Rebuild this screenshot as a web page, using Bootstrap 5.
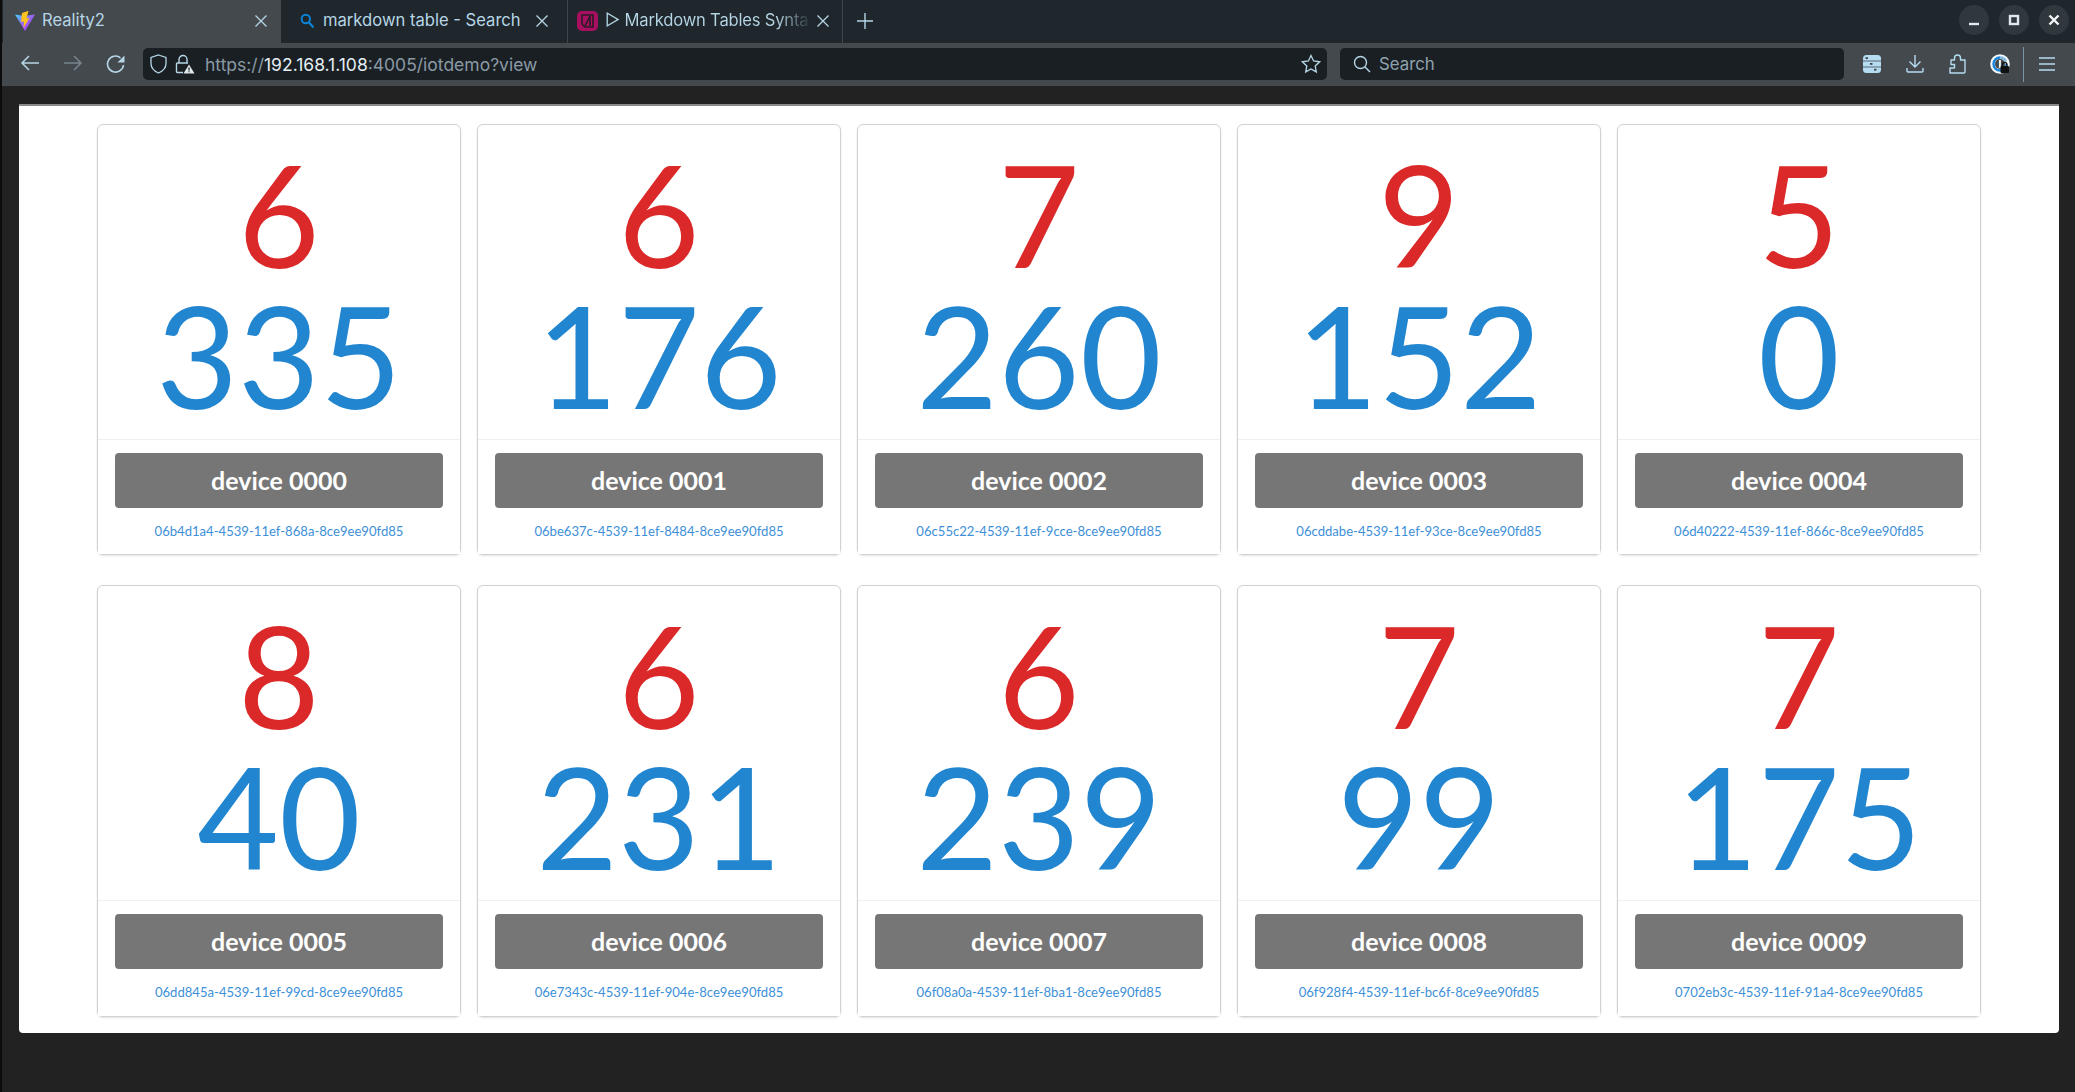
<!DOCTYPE html>
<html lang="en">
<head>
    <meta charset="UTF-8">
    <title>Reality2</title>
    <link href="https://cdn.jsdelivr.net/npm/bootstrap@5.3.0/dist/css/bootstrap.min.css" rel="stylesheet">
    <style>
        html, body { height: 1092px; overflow: hidden; }
        body { background: #222; font-family: "Lato", "Liberation Sans", sans-serif; border-left: 2px solid #0c0c0c; }

        /* browser chrome */
        .chrome { font-family: "Inter", "Liberation Sans", sans-serif; color: #b6d6e6; }
        .tabbar { height: 43px; background: #1f272c; padding-left: 1px; }
        .tabx { height: 43px; font-size: 16.6px; padding-bottom: 2px; white-space: nowrap; overflow: hidden; border-right: 1px solid #3d464c; }
        .tabx svg { flex: none; }
        .tabx .tt { flex: 1; overflow: hidden; }
        .tab-a { width: 278px; background: #44494e; border-right: 0; padding-left: 12px; padding-right: 13px; gap: 7px; }
        .tab-b { width: 287px; padding-left: 19px; padding-right: 18px; gap: 9px; }
        .tab-c { width: 275px; padding-left: 9px; padding-right: 12px; gap: 7px; }
        .tt-fade { letter-spacing: -.2px; color: transparent; background: linear-gradient(90deg, #b6d6e6 84%, #2c353a 100%); -webkit-background-clip: text; background-clip: text; }
        .newtab { margin-left: 14px; margin-bottom: 2px; }
        .winbtns { margin-left: auto; gap: 10px; padding-right: 6px; margin-bottom: 3px; }
        .winbtn { width: 30px; height: 30px; border-radius: 50%; background: #30383d; }
        .toolbar { height: 43px; background: #44494e; padding: 5px 0 6px 0; }
        .navico { width: 43px; flex: none; }
        .navs { width: 141px; padding-left: 6px; flex: none; }
        .urlbar { width: 1184px; height: 32px; background: #1a1f24; border-radius: 5px; flex: none; padding: 0 6px 0 7px; font-size: 17.5px; }
        .urlbar .u1 { color: #8a9aa5; }
        .urlbar .u2 { color: #e4eef4; }
        .urltext { margin-left: 10px; padding-top: 2px; white-space: nowrap; }
        .searchbar { width: 504px; height: 32px; background: #1a1f24; border-radius: 5px; flex: none; margin-left: 13px; padding-left: 13px; font-size: 16.8px; color: #8fa3af; gap: 8px; }
        .searchbar span { padding-top: 2px; }
        .tools { margin-left: 7px; }
        .toolico { width: 42.5px; flex: none; }
        .toolsep { width: 1px; height: 35px; background: #7a95a6; margin: 0 14px 0 2px; flex: none; }

        /* page */
        .panel { margin: 18px 16px 0 17px; height: 929px; background: #fff; border-top: 2px solid #8a8a8a; border-radius: 0 0 4px 4px; padding: 17.5px 78px 0; }
        .devgrid { display: grid; grid-template-columns: repeat(5, 364px); column-gap: 16px; row-gap: 30px; }
        .devcard { height: 431.5px; border: 1px solid #d2d2d2; border-radius: 6px; box-shadow: 0 1px 2px rgba(0,0,0,.12); --bs-card-bg: #fff; }
        .devnums { height: 314px; padding: 18px 0 0; text-align: center; font-size: 141px; line-height: 141px; }
        .num-red { color: #db2828; }
        .num-blue { color: #2185d0; }
        .devfoot { background: #fff; border-top: 1px solid #f0f0f0; padding: 13px 17px 0; text-align: center; flex: 1; }
        .devbtn { display: block; width: 100%; height: 55px; background: #767676; border: 0; border-radius: 4px; color: #fff; font-size: 25px; font-weight: 700; line-height: 55px; padding: 0; }
        .devid { display: block; margin-top: 14px; font-size: 13.1px; line-height: 18px; color: #3d8fd8; text-decoration: none; }
    </style>
</head>
<body>
    <div class="chrome">
        <!-- tabs -->
        <div class="tabbar d-flex align-items-center">
            <div class="tabx tab-a d-flex align-items-center">
                <svg width="20" height="20" viewBox="0 0 20 20">
                    <defs>
                        <linearGradient id="vitePurple" x1="0" y1="0" x2="1" y2="1"><stop offset="0" stop-color="#41d1ff"/><stop offset=".5" stop-color="#9a63f5"/><stop offset="1" stop-color="#bd34fe"/></linearGradient>
                    </defs>
                    <path d="M0 3.500l9 1.500 11-1.500-10 16.500z" fill="url(#vitePurple)"/>
                    <path d="M13 0L7 2l-1 9 3-.5-.5 6.500 6-10-3 .5 2-7.500z" fill="#ffc31e"/>
                </svg>
                <span class="tt">Reality2</span>
                <svg width="14" height="14" viewBox="0 0 14 14"><path d="M1.500 1.500l11 11M12.500 1.500l-11 11" stroke="#b6d6e6" stroke-width="1.300"/></svg>
            </div>
            <div class="tabx tab-b d-flex align-items-center">
                <svg width="14" height="16" viewBox="0 0 14 16"><circle cx="5.800" cy="6" r="4.200" fill="none" stroke="#0a84d6" stroke-width="2"/><path d="M9 9.500l4.500 5" stroke="#0a84d6" stroke-width="2.200"/></svg>
                <span class="tt">markdown table - Search</span>
                <svg width="14" height="14" viewBox="0 0 14 14"><path d="M1.500 1.500l11 11M12.500 1.500l-11 11" stroke="#b6d6e6" stroke-width="1.300"/></svg>
            </div>
            <div class="tabx tab-c d-flex align-items-center">
                <svg width="21" height="20" viewBox="0 0 21 20"><rect width="21" height="20" rx="5" fill="#a80f60"/><path d="M5 4h11v12H8l-3-3z" fill="none" stroke="#2a1b26" stroke-width="1.600"/><path d="M8 15L13 5M13 5v10" stroke="#2a1b26" stroke-width="1.600"/></svg>
                <span class="tt tt-fade">▷ Markdown Tables Syntax</span>
                <svg width="14" height="14" viewBox="0 0 14 14"><path d="M1.500 1.500l11 11M12.500 1.500l-11 11" stroke="#b6d6e6" stroke-width="1.300"/></svg>
            </div>
            <svg class="newtab" width="16" height="16" viewBox="0 0 16 16"><path d="M8 0v16M0 8h16" stroke="#b6d6e6" stroke-width="1.400"/></svg>
            <div class="winbtns d-flex">
                <div class="winbtn d-flex align-items-center justify-content-center"><svg width="12" height="12" viewBox="0 0 12 12"><path d="M1 10h10" stroke="#dfe8ee" stroke-width="2.400"/></svg></div>
                <div class="winbtn d-flex align-items-center justify-content-center"><svg width="12" height="12" viewBox="0 0 12 12"><rect x="2" y="2" width="8" height="8" fill="none" stroke="#dfe8ee" stroke-width="2.400"/></svg></div>
                <div class="winbtn d-flex align-items-center justify-content-center"><svg width="12" height="12" viewBox="0 0 12 12"><path d="M1.500 1.500l9 9M10.500 1.500l-9 9" stroke="#f2f6f8" stroke-width="2.400"/></svg></div>
            </div>
        </div>
        <!-- toolbar -->
        <div class="toolbar d-flex align-items-center">
            <div class="navs d-flex">
                <div class="navico d-flex justify-content-center"><svg width="20" height="18" viewBox="0 0 20 18"><path d="M19 9H2M9 2L2 9l7 7" fill="none" stroke="#b6d6e6" stroke-width="1.500"/></svg></div>
                <div class="navico d-flex justify-content-center"><svg width="20" height="18" viewBox="0 0 20 18"><path d="M1 9h17M11 2l7 7-7 7" fill="none" stroke="#76858f" stroke-width="1.500"/></svg></div>
                <div class="navico d-flex justify-content-center"><svg width="20" height="20" viewBox="0 0 20 20"><path d="M17.500 11a8 8 0 1 1-3-7.200" fill="none" stroke="#b6d6e6" stroke-width="1.600"/><path d="M18.500 1.500v7h-7z" fill="#b6d6e6"/></svg></div>
            </div>
            <div class="urlbar d-flex align-items-center">
                <svg width="17" height="20" viewBox="0 0 17 20"><path d="M8.500 1L16 3.500v6c0 4.800-3 7.500-7.500 9.500C4 17 1 14.300 1 9.500v-6z" fill="none" stroke="#b6d6e6" stroke-width="1.300"/></svg>
                <svg class="ms-2" width="20" height="20" viewBox="0 0 20 20"><path d="M4 9V5.500a4 4 0 0 1 8 0V9" fill="none" stroke="#b6d6e6" stroke-width="1.400"/><path d="M8 18.500H2.500a1 1 0 0 1-1-1V10a1 1 0 0 1 1-1H13" fill="none" stroke="#b6d6e6" stroke-width="1.400"/><path d="M14 10.500l5.500 9h-11z" fill="#dfe8ee"/><path d="M14 13.500v3M14 17.300v1" stroke="#1a1f24" stroke-width="1.200"/></svg>
                <span class="urltext"><span class="u1">https://</span><span class="u2">192.168.1.108</span><span class="u1">:4005/iotdemo?view</span></span>
                <svg class="ms-auto" width="20" height="20" viewBox="0 0 20 20"><path d="M10 1.500l2.600 5.500 6 .8-4.400 4.100 1.100 6L10 15l-5.300 2.900 1.100-6L1.400 7.800l6-.8z" fill="none" stroke="#b6d6e6" stroke-width="1.300"/></svg>
            </div>
            <div class="searchbar d-flex align-items-center">
                <svg width="18" height="18" viewBox="0 0 18 18"><circle cx="7.500" cy="7.500" r="6" fill="none" stroke="#b6d6e6" stroke-width="1.400"/><path d="M12 12l5 5" stroke="#b6d6e6" stroke-width="1.400"/></svg>
                <span>Search</span>
            </div>
            <div class="tools d-flex align-items-center">
                <div class="toolico d-flex justify-content-center"><svg width="18" height="18" viewBox="0 0 18 18"><rect width="18" height="18" rx="3.500" fill="#b6dcf2"/><path d="M0 6h18M0 12h18" stroke="#44494e" stroke-width=".8"/><rect x="2.500" y="2.200" width="2.500" height="1.800" fill="#44494e"/><rect x="7" y="8" width="2.500" height="1.800" fill="#44494e"/><rect x="11" y="13.800" width="2.500" height="1.800" fill="#44494e"/></svg></div>
                <div class="toolico d-flex justify-content-center"><svg width="18" height="18" viewBox="0 0 18 18"><path d="M9 0v12M3.500 6.500L9 12l5.500-5.500M1 13v3a1 1 0 0 0 1 1h14a1 1 0 0 0 1-1v-3" fill="none" stroke="#b6dcf2" stroke-width="1.400"/></svg></div>
                <div class="toolico d-flex justify-content-center"><svg width="17" height="20" viewBox="0 0 17 20"><path d="M1 19h14a1 1 0 0 0 1-1V6h-4.500V4a3 3 0 0 0-6 0v2H2v4.500h3.500V14H1z" fill="none" stroke="#b6dcf2" stroke-width="1.400" stroke-linejoin="round"/></svg></div>
                <div class="toolico d-flex justify-content-center"><svg width="20" height="20" viewBox="0 0 20 20"><circle cx="10" cy="10" r="9.800" fill="#f2f7fa"/><path d="M10 3.500A6.500 6.500 0 1 0 16.500 10" fill="none" stroke="#1c84d8" stroke-width="2.400"/><path d="M10 3.500A6.500 6.500 0 0 1 16 7.500" fill="none" stroke="#7db6e2" stroke-width="2.400"/><circle cx="10" cy="10" r="5" fill="#44494e"/><rect x="8.900" y="6" width="2" height="8" fill="#f2f7fa"/><rect x="10.500" y="12" width="8.500" height="7" rx="1" fill="#111"/><path d="M12.500 12v-1.500a2.200 2.200 0 0 1 4.400 0V12" fill="none" stroke="#111" stroke-width="1.300"/></svg></div>
                <div class="toolsep"></div>
                <svg width="18" height="14" viewBox="0 0 18 14"><path d="M1 1h16M1 7h16M1 13h16" stroke="#b6dcf2" stroke-width="1.400"/></svg>
            </div>
        </div>
    </div>

    <!-- page -->
    <div class="panel">
        <div class="devgrid" id="devgrid"></div>
    </div>

    <script src="https://cdn.jsdelivr.net/npm/bootstrap@5.3.0/dist/js/bootstrap.bundle.min.js"></script>
    <script>
        const devices = [
            [6, 335, '0000', '06b4d1a4-4539-11ef-868a-8ce9ee90fd85'],
            [6, 176, '0001', '06be637c-4539-11ef-8484-8ce9ee90fd85'],
            [7, 260, '0002', '06c55c22-4539-11ef-9cce-8ce9ee90fd85'],
            [9, 152, '0003', '06cddabe-4539-11ef-93ce-8ce9ee90fd85'],
            [5, 0, '0004', '06d40222-4539-11ef-866c-8ce9ee90fd85'],
            [8, 40, '0005', '06dd845a-4539-11ef-99cd-8ce9ee90fd85'],
            [6, 231, '0006', '06e7343c-4539-11ef-904e-8ce9ee90fd85'],
            [6, 239, '0007', '06f08a0a-4539-11ef-8ba1-8ce9ee90fd85'],
            [7, 99, '0008', '06f928f4-4539-11ef-bc6f-8ce9ee90fd85'],
            [7, 175, '0009', '0702eb3c-4539-11ef-91a4-8ce9ee90fd85']
        ];
        document.getElementById('devgrid').innerHTML = devices.map(d => `
            <div class="card devcard">
                <div class="devnums">
                    <div class="num-red">${d[0]}</div>
                    <div class="num-blue">${d[1]}</div>
                </div>
                <div class="devfoot">
                    <button type="button" class="btn devbtn">device ${d[2]}</button>
                    <a class="devid" href="#">${d[3]}</a>
                </div>
            </div>`).join('');
    </script>
</body>
</html>
